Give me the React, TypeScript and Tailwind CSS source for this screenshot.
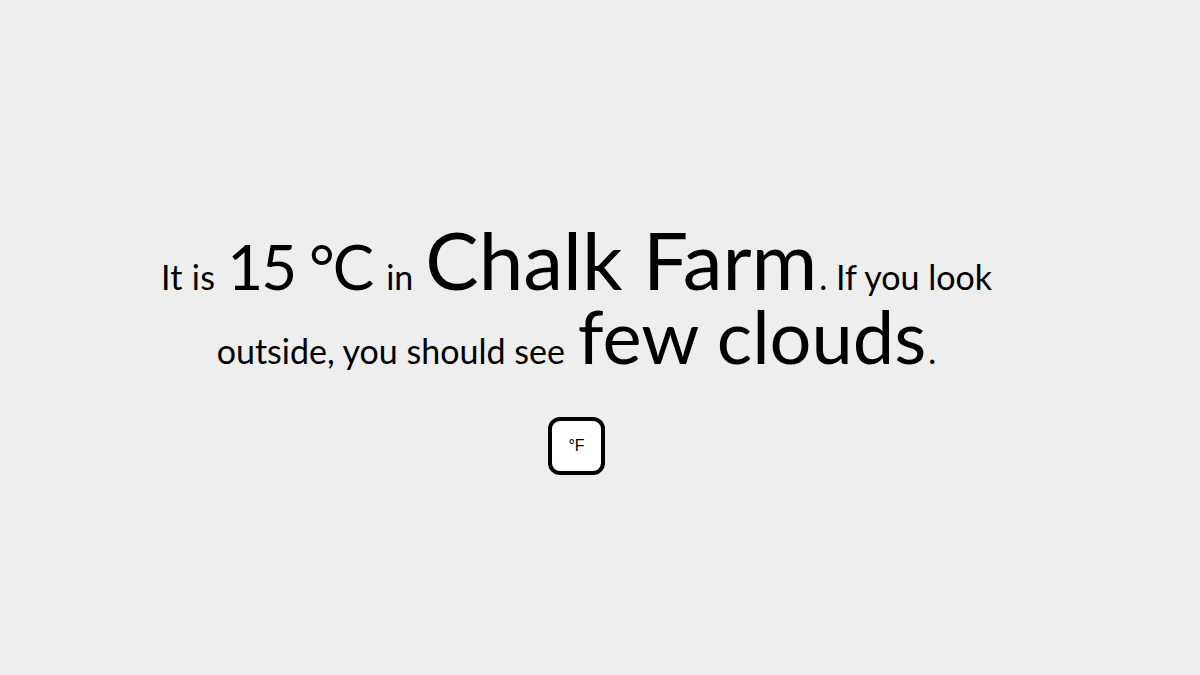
import React, { useState } from 'react';

export default function App() {
  const [unit, setUnit] = useState<'C' | 'F'>('C');
  const temp = unit === 'C' ? '15 °C' : '59 °F';

  return (
    <div className="min-h-screen w-full bg-[#eeeeee] text-black font-['Lato',sans-serif] pr-[47px]">
      <div className="flex flex-col items-center pt-[219px]">
        {/* Sentence, line 1 */}
        <p className="flex items-baseline leading-none">
          <span className="text-[34px] tracking-[0.3px]">It is</span>
          <span className="text-[62px] tracking-[-2px] ml-[12px]">{temp}</span>
          <span className="text-[34px] ml-[14px]">in</span>
          <span className="text-[80px] ml-[12px]">Chalk Farm</span>
          <span className="text-[34px] ml-[2px]">. If you look</span>
        </p>

        {/* Sentence, line 2 */}
        <p className="flex items-baseline leading-none">
          <span className="text-[34px]">outside, you should see</span>
          <span className="text-[74px] ml-[13px]">few clouds</span>
          <span className="text-[34px] ml-[2px]">.</span>
        </p>

        {/* Unit toggle */}
        <button
          onClick={() => setUnit(unit === 'C' ? 'F' : 'C')}
          className="mt-[44px] w-[57px] h-[58px] flex items-center justify-center bg-white border-4 border-black rounded-[12px] font-['Liberation_Sans',Arial,sans-serif] text-[16px] text-black"
        >
          {unit === 'C' ? '°F' : '°C'}
        </button>
      </div>
    </div>
  );
}
